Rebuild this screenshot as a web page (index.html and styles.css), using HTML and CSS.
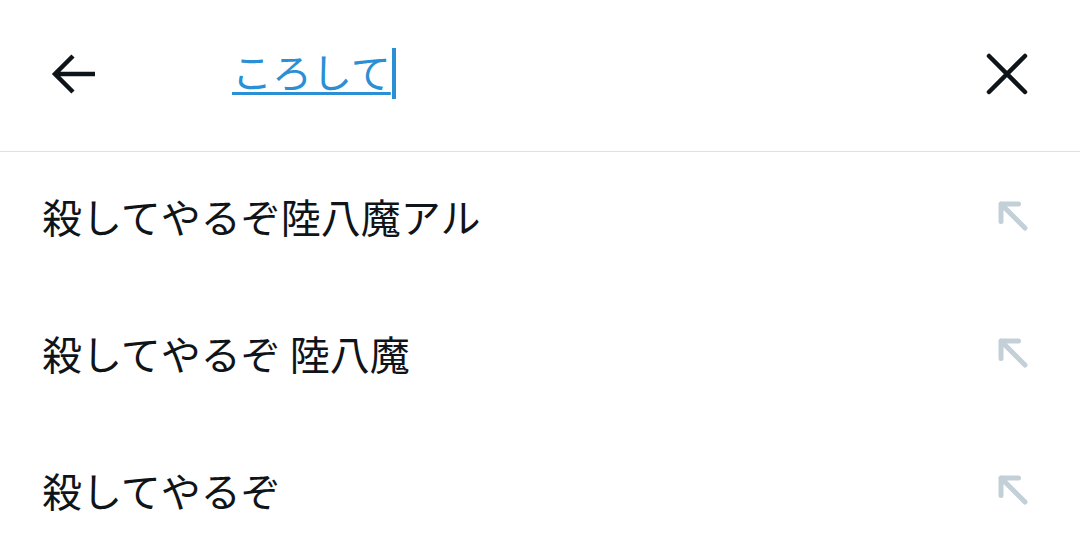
FILE: index.html
```html
<!DOCTYPE html>
<html lang="ja">
<head>
  <meta charset="UTF-8">
  <meta name="viewport" content="width=device-width, initial-scale=1.0">
  <title>検索</title>
  <link rel="stylesheet" href="styles.css">
</head>
<body>
  <div class="search-bar">
    <svg class="icon-back" width="46" height="44" viewBox="0 0 46 44">
      <path d="M44 22H5M22 4L4 22l18 18" fill="none" stroke="#0f1419" stroke-width="4.5" stroke-linecap="butt" stroke-linejoin="miter"/>
    </svg>
    <div class="query">
      <span class="query-text">ころして</span><span class="caret"></span>
    </div>
    <svg class="icon-close" width="42" height="42" viewBox="0 0 42 42">
      <path d="M3 3l36 36M39 3L3 39" fill="none" stroke="#0f1419" stroke-width="4.5" stroke-linecap="round"/>
    </svg>
  </div>

  <ul class="suggestions">
    <li class="suggestion">
      <span class="suggestion-text">殺してやるぞ陸八魔アル</span>
      <svg class="icon-fill" width="32" height="32" viewBox="0 0 32 32">
        <path d="M4 21.5V4h17.5M4 4l24 24" fill="none" stroke="#c3d0d8" stroke-width="5" stroke-linecap="round" stroke-linejoin="round"/>
      </svg>
    </li>
    <li class="suggestion">
      <span class="suggestion-text">殺してやるぞ 陸八魔</span>
      <svg class="icon-fill" width="32" height="32" viewBox="0 0 32 32">
        <path d="M4 21.5V4h17.5M4 4l24 24" fill="none" stroke="#c3d0d8" stroke-width="5" stroke-linecap="round" stroke-linejoin="round"/>
      </svg>
    </li>
    <li class="suggestion">
      <span class="suggestion-text">殺してやるぞ</span>
      <svg class="icon-fill" width="32" height="32" viewBox="0 0 32 32">
        <path d="M4 21.5V4h17.5M4 4l24 24" fill="none" stroke="#c3d0d8" stroke-width="5" stroke-linecap="round" stroke-linejoin="round"/>
      </svg>
    </li>
  </ul>
</body>
</html>
```

FILE: styles.css
```css
* {
  margin: 0;
  padding: 0;
  box-sizing: border-box;
}

body {
  width: 1080px;
  height: 556px;
  overflow: hidden;
  background: #ffffff;
  font-family: "Noto Sans CJK JP", "Noto Sans", sans-serif;
  color: #0f1419;
}

.search-bar {
  display: flex;
  align-items: center;
  height: 152px;
  padding: 0 52px 4px 51px;
  border-bottom: 1px solid #dde1e4;
}

.icon-back {
  flex: none;
}

.query {
  flex: 1;
  display: flex;
  align-items: center;
  margin-left: 135px;
  font-size: 40px;
  line-height: 52px;
  color: #2a8fd5;
}

.query-text {
  margin-bottom: 6px;
  text-decoration: underline;
  text-decoration-thickness: 3px;
  text-underline-offset: 4px;
}

.caret {
  display: inline-block;
  width: 4px;
  height: 51px;
  margin-left: 1px;
  background: #2a8fd5;
}

.icon-close {
  flex: none;
}

.suggestions {
  list-style: none;
}

.suggestion {
  display: flex;
  align-items: center;
  justify-content: space-between;
  height: 137px;
  padding: 0 52px 10px 42px;
}

.suggestion-text {
  font-size: 40px;
  line-height: 52px;
}

.icon-fill {
  flex: none;
  margin-right: -1px;
}
```
